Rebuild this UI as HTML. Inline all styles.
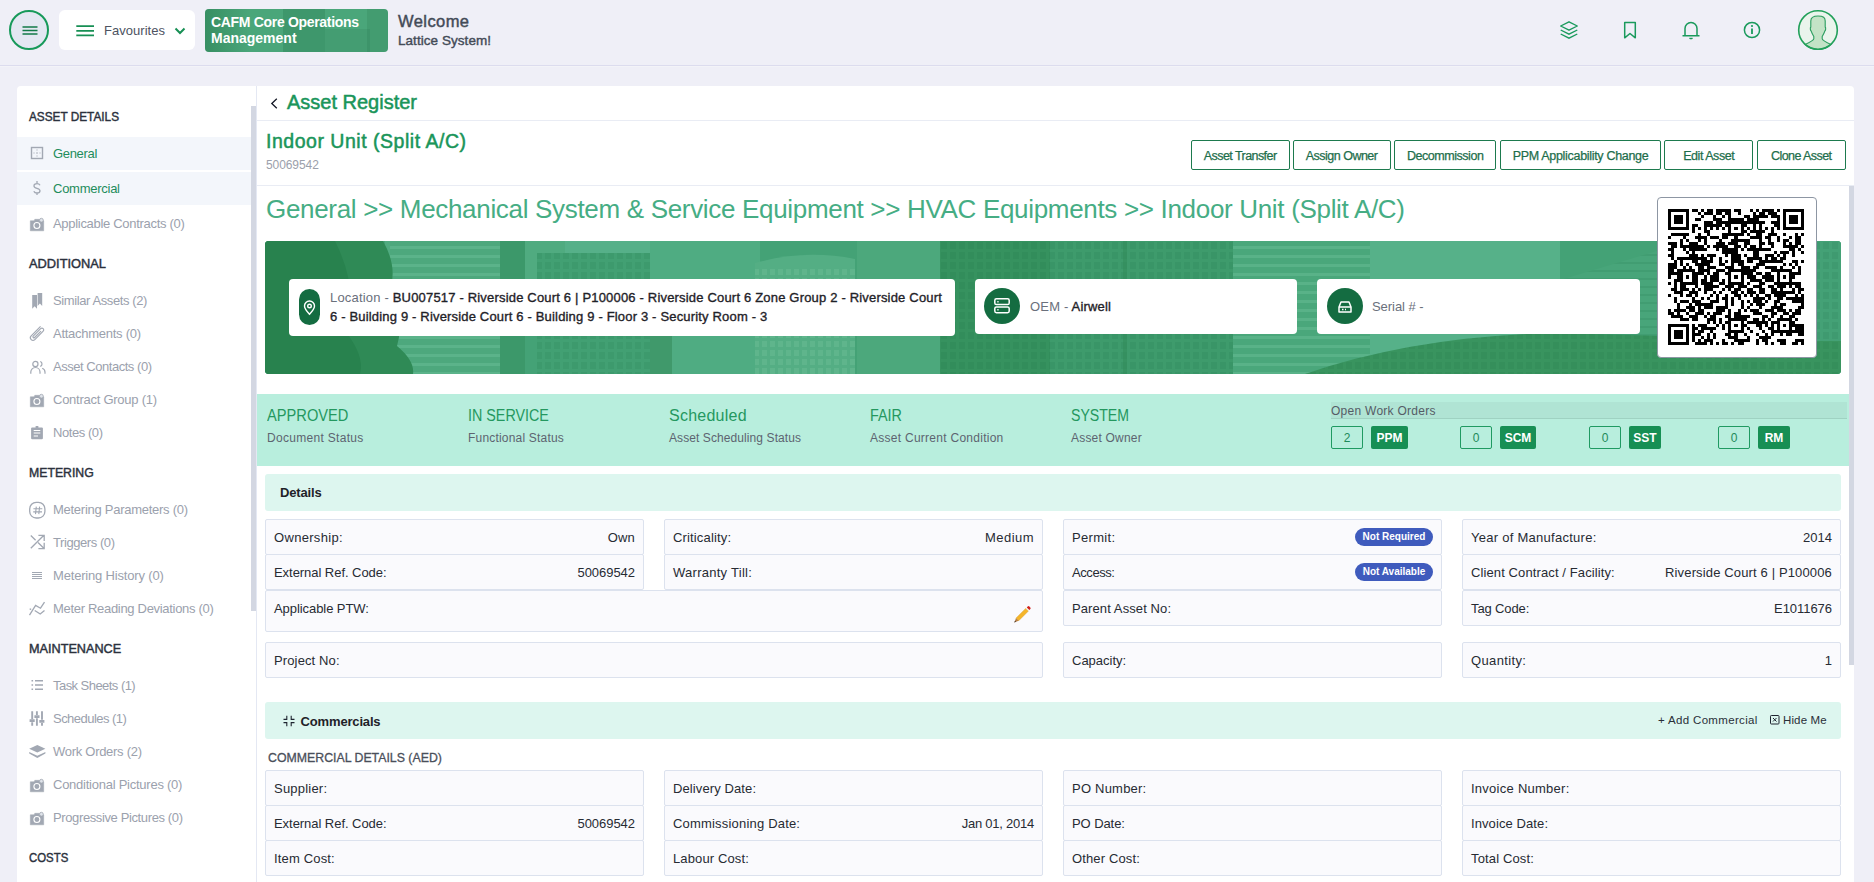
<!DOCTYPE html>
<html><head><meta charset="utf-8"><title>Asset</title>
<style>
*{box-sizing:border-box;margin:0;padding:0}
html,body{width:1874px;height:882px;overflow:hidden}
body{background:#efeff7;font-family:"Liberation Sans",sans-serif;position:relative;color:#333}
.a{position:absolute;white-space:nowrap}
#hdr{left:0;top:0;width:1874px;height:66px;border-bottom:1px solid #dcdcee;box-shadow:0 1px 0 #f3f3f8}
#menu{left:9px;top:10px;width:40px;height:40px;border:2px solid #17995a;border-radius:50%;background:#e3e7f2}
#fav{left:59px;top:10px;width:136px;height:40px;background:#fff;border-radius:6px}
#cafm{left:205px;top:9px;width:183px;height:43px;border-radius:4px;overflow:hidden;background:#4aa67a}
#sb{left:17px;top:86px;width:240px;height:820px;background:#fff;border-radius:4px 0 0 0}
#main{left:256px;top:86px;width:1598px;height:820px;background:#fff;border-left:1px solid #e4e8f3;border-radius:0 4px 0 0}
.sh{color:#2b313d;-webkit-text-stroke:.4px #2b313d}
.si{color:#9ba1ad}
.sic{left:30px;width:16px;height:16px;overflow:visible}
.btn{top:140px;height:30px;border:1px solid #1d7a4e;border-radius:2px;background:#fff}
.bt{color:#1d6e4b;-webkit-text-stroke:.25px #1d6e4b}
.card{background:#fff;border-radius:4px}
.st1{color:#24985f}
.st2{color:#5d6470}
.cnt{top:426px;width:32px;height:23px;border:1px solid #1f9a62;border-radius:2px}
.tag{top:426px;height:23px;background:#178f54;border-radius:2px}
.cell{background:#fafafd;border:1px solid #dce2ee;border-radius:2px}
.lb{color:#272b33}
.pill{background:#3f5bbd;border-radius:9px;height:18px}
.sec{background:#ddf6ef;border-radius:3px}
</style></head><body>

<div id="hdr" class="a"></div>
<div id="menu" class="a"><svg width="36" height="36" style="position:absolute;left:0;top:0"><path d="M11.5 15h15M11.5 18.5h15M11.5 22h15" stroke="#127a48" stroke-width="1.4"/></svg></div>
<div id="fav" class="a"><svg width="20" height="14" style="position:absolute;left:16px;top:15px"><path d="M1.3 1.2h17.7M1.3 5.8h17.7M1.3 10.4h17.7" stroke="#178f54" stroke-width="1.8"/></svg><svg width="12" height="8" style="position:absolute;left:115px;top:17px"><path d="M1.5 1.5l4.5 4.5l4.5-4.5" stroke="#178f54" stroke-width="2" fill="none"/></svg></div>
<div id="t1" class="a " style="top:23.00px;font-size:13px;line-height:16px;letter-spacing:0.033px;left:104px;color:#4d5362">Favourites</div>
<div id="cafm" class="a"><div class="a" style="left:0;top:0;width:45px;height:43px;background:linear-gradient(90deg,rgba(20,100,55,.35),rgba(20,100,55,0))"></div><div class="a" style="left:78px;top:0;width:42px;height:43px;background:rgba(25,100,60,.22)"></div><div class="a" style="left:120px;top:20px;width:45px;height:23px;background:rgba(25,100,60,.12)"></div><div class="a" style="left:162px;top:0;width:21px;height:43px;background:rgba(25,100,60,.15)"></div></div>
<div id="t2" class="a " style="top:14.00px;font-size:14px;line-height:16px;letter-spacing:-0.317px;left:211px;font-weight:bold;color:#fff">CAFM Core Operations</div>
<div id="t3" class="a " style="top:30.00px;font-size:14px;line-height:16px;left:211px;font-weight:bold;color:#fff">Management</div>
<div id="t4" class="a " style="top:11.00px;font-size:16.5px;line-height:21px;letter-spacing:0.422px;left:398px;color:#434b57;-webkit-text-stroke:.45px #434b57">Welcome</div>
<div id="t5" class="a " style="top:32.00px;font-size:13.5px;line-height:17px;letter-spacing:0.050px;left:398px;color:#434b57;-webkit-text-stroke:.4px #434b57">Lattice System!</div>
<svg class="a" style="left:1558px;top:19px" width="22" height="22" viewBox="0 0 22 22"><path d="M11 2.8L19.3 7L11 11.2L2.7 7Z" fill="none" stroke="#1a9a5c" stroke-width="1.4" stroke-linejoin="round"/><path d="M2.7 11L11 15.2L19.3 11M2.7 15L11 19.2L19.3 15" fill="none" stroke="#1a9a5c" stroke-width="1.4"/></svg>
<svg class="a" style="left:1622px;top:20px" width="16" height="20" viewBox="0 0 16 20"><path d="M2.7 2.5h10.6v15.3l-5.3-4.3l-5.3 4.3Z" fill="none" stroke="#1a9a5c" stroke-width="1.5" stroke-linejoin="round"/></svg>
<svg class="a" style="left:1680px;top:19px" width="22" height="22" viewBox="0 0 22 22"><path d="M5 16.5V9.5a6 6 0 0 1 12 0V16.5M2.5 16.7h17" fill="none" stroke="#1a9a5c" stroke-width="1.5"/><path d="M9.5 19q1.5 1.3 3 0" fill="none" stroke="#1a9a5c" stroke-width="1.3"/></svg>
<svg class="a" style="left:1742px;top:20px" width="20" height="20" viewBox="0 0 20 20"><circle cx="10" cy="10" r="7.6" fill="none" stroke="#1a9a5c" stroke-width="1.5"/><path d="M10 8.5v5.5" stroke="#1a9a5c" stroke-width="1.8"/><circle cx="10" cy="6" r="1.1" fill="#1a9a5c"/></svg>
<svg class="a" style="left:1797px;top:9px" width="42" height="42" viewBox="0 0 42 42"><circle cx="21" cy="21" r="19.3" fill="#eaf4ec"/><path d="M21 7C15.5 7 13.8 8.8 13.8 12V18C13 18.8 13.2 21.5 14.3 22.3C15 24.5 16 26 16.8 27.5V29.8C16.8 31 15 32.3 8.1 35.5A19.3 19.3 0 0 0 33.9 35.5C27 32.3 25.2 31 25.2 29.8V27.5C26 26 27 24.5 27.7 22.3C28.8 21.5 29 18.8 28.2 18V12C28.2 8.8 26.5 7 21 7Z" fill="#c3e3c6" stroke="#2a9d5e" stroke-width="1.1"/><circle cx="21" cy="21" r="19.3" fill="none" stroke="#22a05a" stroke-width="1.6"/></svg>
<div id="sb" class="a"></div>
<div class="a" style="left:17px;top:137px;width:234px;height:33px;background:#f3f6fb"></div>
<div class="a" style="left:17px;top:172px;width:234px;height:33px;background:#f3f6fb"></div>
<div class="a" style="left:251px;top:106px;width:5px;height:505px;background:#d3d7e2"></div>
<div id="t6" class="a sh" style="top:110.00px;font-size:12px;line-height:15px;transform:scaleX(0.9826);transform-origin:0 0;left:29px;">ASSET DETAILS</div>
<div id="t7" class="a sh" style="top:257.00px;font-size:12px;line-height:15px;transform:scaleX(1.0692);transform-origin:0 0;left:29px;">ADDITIONAL</div>
<div id="t8" class="a sh" style="top:466.00px;font-size:12px;line-height:15px;transform:scaleX(1.0222);transform-origin:0 0;left:29px;">METERING</div>
<div id="t9" class="a sh" style="top:642.00px;font-size:12px;line-height:15px;transform:scaleX(1.0556);transform-origin:0 0;left:29px;">MAINTENANCE</div>
<div id="t10" class="a sh" style="top:851.00px;font-size:12px;line-height:15px;transform:scaleX(0.9506);transform-origin:0 0;left:29px;">COSTS</div>
<svg class="a sic" style="top:146px" viewBox="0 0 16 16"><rect x="1.5" y="1.5" width="11" height="11" fill="none" stroke="#a2a8b3" stroke-width="1.4"/><path d="M7 3.5v1M7 6.5v1M7 9.5v1M3.5 7h1M6.5 7h1M9.5 7h1" stroke="#a2a8b3" stroke-width="1"/></svg>
<div id="t11" class="a si" style="top:146.00px;font-size:13px;line-height:16px;letter-spacing:-0.326px;left:53px;color:#1e8d5c">General</div>
<svg class="a sic" style="top:181px" viewBox="0 0 16 16"><path d="M10 4.3c-.5-1-1.6-1.6-3-1.6c-1.8 0-3 .9-3 2.2c0 3 6 1.8 6 4.9c0 1.4-1.3 2.3-3 2.3c-1.5 0-2.7-.7-3.2-1.8M7 0v2.7M7 11.3v2.7" fill="none" stroke="#a2a8b3" stroke-width="1.3"/></svg>
<div id="t12" class="a si" style="top:181.00px;font-size:13px;line-height:16px;letter-spacing:-0.261px;left:53px;color:#1e8d5c">Commercial</div>
<svg class="a sic" style="top:216px" viewBox="0 0 16 16"><path d="M.3 4.8H4.2L4.8 3.3H9.5V4.8H13.7V14.8H.3Z" fill="#a2a8b3" stroke="#a2a8b3" stroke-width=".5" stroke-linejoin="round"/><circle cx="6.9" cy="9.5" r="3" fill="none" stroke="#fff" stroke-width="1.1"/><circle cx="11.4" cy="4.2" r="1.9" fill="#dfe3ea" stroke="#a2a8b3" stroke-width=".8"/></svg>
<div id="t13" class="a si" style="top:216.00px;font-size:13px;line-height:16px;letter-spacing:-0.302px;left:53px;color:#9ba1ad">Applicable Contracts (0)</div>
<svg class="a sic" style="top:293px" viewBox="0 0 16 16"><path d="M2.2 2.1H7V15.7L4.6 13.3L2.2 15.7Z" fill="#a2a8b3"/><path d="M7.6 .1H12.2V12.9L9.9 10.5L7.6 12.9Z" fill="#a2a8b3"/></svg>
<div id="t14" class="a si" style="top:293.00px;font-size:13px;line-height:16px;letter-spacing:-0.397px;left:53px;color:#9ba1ad">Similar Assets (2)</div>
<svg class="a sic" style="top:326px" viewBox="0 0 16 16"><path d="M7.5 -2.6H-5.8A2.6 2.6 0 0 0 -5.8 2.6H6A1.8 1.8 0 0 0 6 -1H-4.5A1 1 0 0 0 -4.5 1H4.5" transform="translate(7.1 7.6) rotate(-45)" fill="none" stroke="#a2a8b3" stroke-width="1.15"/></svg>
<div id="t15" class="a si" style="top:326.00px;font-size:13px;line-height:16px;letter-spacing:-0.269px;left:53px;color:#9ba1ad">Attachments (0)</div>
<svg class="a sic" style="top:359px" viewBox="0 0 16 16"><circle cx="5.4" cy="4.9" r="2.6" fill="none" stroke="#a2a8b3" stroke-width="1.2"/><path d="M.8 14.8V13.1A4.6 4.6 0 0 1 10 13.1V14.8M10.2 2.5A2.5 2.5 0 0 1 10.2 7.3M12.2 9.3A4 4 0 0 1 15 13.2V14.8" fill="none" stroke="#a2a8b3" stroke-width="1.2"/></svg>
<div id="t16" class="a si" style="top:359.00px;font-size:13px;line-height:16px;letter-spacing:-0.467px;left:53px;color:#9ba1ad">Asset Contacts (0)</div>
<svg class="a sic" style="top:392px" viewBox="0 0 16 16"><path d="M.3 4.8H4.2L4.8 3.3H9.5V4.8H13.7V14.8H.3Z" fill="#a2a8b3" stroke="#a2a8b3" stroke-width=".5" stroke-linejoin="round"/><circle cx="6.9" cy="9.5" r="3" fill="none" stroke="#fff" stroke-width="1.1"/><circle cx="11.4" cy="4.2" r="1.9" fill="#dfe3ea" stroke="#a2a8b3" stroke-width=".8"/></svg>
<div id="t17" class="a si" style="top:392.00px;font-size:13px;line-height:16px;letter-spacing:-0.257px;left:53px;color:#9ba1ad">Contract Group (1)</div>
<svg class="a sic" style="top:425px" viewBox="0 0 16 16"><rect x="1.1" y="2.4" width="11.8" height="11.8" rx="1" fill="#a2a8b3"/><rect x="5.6" y="1" width="2.8" height="2.6" rx=".6" fill="#a2a8b3"/><path d="M3.7 5.5H10.3M3.7 8H10.3M3.7 11H8" stroke="#fff" stroke-width="1.1"/></svg>
<div id="t18" class="a si" style="top:425.00px;font-size:13px;line-height:16px;letter-spacing:-0.434px;left:53px;color:#9ba1ad">Notes (0)</div>
<svg class="a sic" style="top:502px" viewBox="0 0 16 16"><rect x="-.3" y=".4" width="15.2" height="15.6" rx="6.5" fill="none" stroke="#a2a8b3" stroke-width="1.3"/><path d="M6.3 4.6L5.5 12.1M9.6 4.6L8.8 12.1M3.4 6.8H12.3M3.2 9.9H12" stroke="#a2a8b3" stroke-width="1.1"/></svg>
<div id="t19" class="a si" style="top:502.00px;font-size:13px;line-height:16px;letter-spacing:-0.267px;left:53px;color:#9ba1ad">Metering Parameters (0)</div>
<svg class="a sic" style="top:535px" viewBox="0 0 16 16"><path d="M.8 .5L5.6 5.2M8 7.5L13.8 13.2M14.2 7.8V13.6H8.4M.8 13.2L13.6 .5M8.4 .3H14.2V6" fill="none" stroke="#a2a8b3" stroke-width="1.3"/></svg>
<div id="t20" class="a si" style="top:535.00px;font-size:13px;line-height:16px;letter-spacing:-0.427px;left:53px;color:#9ba1ad">Triggers (0)</div>
<svg class="a sic" style="top:568px" viewBox="0 0 16 16"><path d="M2 4.5H12M2 6.5H12M2 8.5H12M2 10.5H12" stroke="#a2a8b3" stroke-width="1" shape-rendering="crispEdges"/></svg>
<div id="t21" class="a si" style="top:568.00px;font-size:13px;line-height:16px;letter-spacing:-0.176px;left:53px;color:#9ba1ad">Metering History (0)</div>
<svg class="a sic" style="top:601px" viewBox="0 0 16 16"><path d="M-.5 14.2L5.6 4.4L10.5 7.2L14.5 1.2M4.7 9.5L10.2 13L14.5 9.5M-.3 8L1.2 8.3" fill="none" stroke="#a2a8b3" stroke-width="1.3"/></svg>
<div id="t22" class="a si" style="top:601.00px;font-size:13px;line-height:16px;letter-spacing:-0.307px;left:53px;color:#9ba1ad">Meter Reading Deviations (0)</div>
<svg class="a sic" style="top:678px" viewBox="0 0 16 16"><path d="M1.5 2.8h1.6M1.5 7h1.6M1.5 11.2h1.6M5 2.8h8M5 7h8M5 11.2h8" stroke="#a2a8b3" stroke-width="1.5"/></svg>
<div id="t23" class="a si" style="top:678.00px;font-size:13px;line-height:16px;letter-spacing:-0.544px;left:53px;color:#9ba1ad">Task Sheets (1)</div>
<svg class="a sic" style="top:711px" viewBox="0 0 16 16"><path d="M2.2 .3V8.2M2.2 11.3V14.8M6.9 .3V4.1M6.9 7.2V14.8M12 .3V8.7M12 11.9V14.8" stroke="#a2a8b3" stroke-width="1.9"/><path d="M-.4 9.7H4.7M4.4 5.6H9.5M9.3 10.3H14.4" stroke="#a2a8b3" stroke-width="2.7"/></svg>
<div id="t24" class="a si" style="top:711.00px;font-size:13px;line-height:16px;letter-spacing:-0.535px;left:53px;color:#9ba1ad">Schedules (1)</div>
<svg class="a sic" style="top:744px" viewBox="0 0 16 16"><path d="M7.3 1L15.4 4.8L7.3 8.6L-.8 4.8Z" fill="#a2a8b3"/><path d="M-.8 8L7.3 11.8L15.4 8V9.6L7.3 13.9L-.8 9.6Z" fill="#a2a8b3"/></svg>
<div id="t25" class="a si" style="top:744.00px;font-size:13px;line-height:16px;letter-spacing:-0.282px;left:53px;color:#9ba1ad">Work Orders (2)</div>
<svg class="a sic" style="top:777px" viewBox="0 0 16 16"><path d="M.3 4.8H4.2L4.8 3.3H9.5V4.8H13.7V14.8H.3Z" fill="#a2a8b3" stroke="#a2a8b3" stroke-width=".5" stroke-linejoin="round"/><circle cx="6.9" cy="9.5" r="3" fill="none" stroke="#fff" stroke-width="1.1"/><circle cx="11.4" cy="4.2" r="1.9" fill="#dfe3ea" stroke="#a2a8b3" stroke-width=".8"/></svg>
<div id="t26" class="a si" style="top:777.00px;font-size:13px;line-height:16px;letter-spacing:-0.249px;left:53px;color:#9ba1ad">Conditional Pictures (0)</div>
<svg class="a sic" style="top:810px" viewBox="0 0 16 16"><path d="M.3 4.8H4.2L4.8 3.3H9.5V4.8H13.7V14.8H.3Z" fill="#a2a8b3" stroke="#a2a8b3" stroke-width=".5" stroke-linejoin="round"/><circle cx="6.9" cy="9.5" r="3" fill="none" stroke="#fff" stroke-width="1.1"/><circle cx="11.4" cy="4.2" r="1.9" fill="#dfe3ea" stroke="#a2a8b3" stroke-width=".8"/></svg>
<div id="t27" class="a si" style="top:810.00px;font-size:13px;line-height:16px;letter-spacing:-0.379px;left:53px;color:#9ba1ad">Progressive Pictures (0)</div>
<div id="main" class="a"></div>
<div class="a" style="left:257px;top:120px;width:1597px;height:1px;background:#e9ecf4"></div>
<div class="a" style="left:257px;top:185px;width:1597px;height:1px;background:#e9ecf4"></div>
<div class="a" style="left:1849px;top:186px;width:5px;height:479px;background:#d3d7e2"></div>
<svg class="a" style="left:269px;top:97px" width="10" height="13"><path d="M7.8 1.8L2.8 6.5l5 4.7" fill="none" stroke="#141826" stroke-width="1.3"/></svg>
<div id="t28" class="a " style="top:90.00px;font-size:20px;line-height:25px;letter-spacing:-0.004px;left:287px;color:#1a955a;-webkit-text-stroke:.5px #1a955a">Asset Register</div>
<div id="t29" class="a " style="top:129.00px;font-size:19.5px;line-height:24px;letter-spacing:0.519px;left:266px;color:#1a955a;-webkit-text-stroke:.5px #1a955a">Indoor Unit (Split A/C)</div>
<div id="t30" class="a " style="top:158.00px;font-size:12px;line-height:15px;letter-spacing:-0.084px;left:266px;color:#9ba0ab">50069542</div>
<div class="a btn" style="left:1191px;width:99px"></div>
<div id="t31" class="a bt" style="top:148.00px;font-size:12.5px;line-height:16px;letter-spacing:-0.561px;left:1203.8px;">Asset Transfer</div>
<div class="a btn" style="left:1293px;width:98px"></div>
<div id="t32" class="a bt" style="top:148.00px;font-size:12.5px;line-height:16px;letter-spacing:-0.501px;left:1305.7px;">Assign Owner</div>
<div class="a btn" style="left:1394px;width:102px"></div>
<div id="t33" class="a bt" style="top:148.00px;font-size:12.5px;line-height:16px;letter-spacing:-0.452px;left:1406.9px;">Decommission</div>
<div class="a btn" style="left:1500px;width:161px"></div>
<div id="t34" class="a bt" style="top:148.00px;font-size:12.5px;line-height:16px;letter-spacing:-0.311px;left:1512.7px;">PPM Applicability Change</div>
<div class="a btn" style="left:1664px;width:89px"></div>
<div id="t35" class="a bt" style="top:148.00px;font-size:12.5px;line-height:16px;letter-spacing:-0.454px;left:1683.2px;">Edit Asset</div>
<div class="a btn" style="left:1757px;width:89px"></div>
<div id="t36" class="a bt" style="top:148.00px;font-size:12.5px;line-height:16px;letter-spacing:-0.571px;left:1771px;">Clone Asset</div>
<div id="t37" class="a " style="top:193.00px;font-size:26px;line-height:32px;letter-spacing:-0.319px;left:266px;color:#46ad84">General &gt;&gt; Mechanical System &amp; Service Equipment &gt;&gt; HVAC Equipments &gt;&gt; Indoor Unit (Split A/C)</div>
<div class="a" style="left:265px;top:241px;width:1576px;height:133px;border-radius:4px;overflow:hidden;background:#45a377"><svg width="1576" height="133" style="position:absolute;left:0;top:0"><defs><pattern id="win" width="9" height="10" patternUnits="userSpaceOnUse"><rect width="9" height="10" fill="none"/><rect x="1" y="1" width="6" height="7" fill="#1d6e45" opacity=".12"/></pattern><pattern id="winL" width="8" height="9" patternUnits="userSpaceOnUse"><rect x="1" y="1" width="5" height="6" fill="#8fd4b0" opacity=".18"/></pattern><pattern id="hs" width="10" height="8" patternUnits="userSpaceOnUse"><rect x="0" y="5" width="10" height="2" fill="#1d6e45" opacity=".15"/></pattern><pattern id="hsL" width="10" height="9" patternUnits="userSpaceOnUse"><rect x="0" y="5" width="10" height="3" fill="#8fd8b4" opacity=".22"/></pattern><pattern id="leaf" width="14" height="12" patternUnits="userSpaceOnUse"><circle cx="4" cy="4" r="2.2" fill="#3d9a66" opacity=".35"/><circle cx="11" cy="9" r="1.8" fill="#3d9a66" opacity=".3"/></pattern></defs><rect width="1576" height="133" fill="#44a276"/><rect x="120" y="0" width="280" height="40" fill="#50ab80"/><rect x="125" y="0" width="110" height="133" fill="#4da87d"/><rect x="125" y="0" width="110" height="133" fill="url(#hsL)"/><rect x="235" y="0" width="25" height="133" fill="#3c986a"/><rect x="272" y="12" width="125" height="121" fill="#42a073"/><rect x="272" y="12" width="125" height="121" fill="url(#win)"/><rect x="300" y="0" width="95" height="12" fill="#56b089"/><rect x="385" y="0" width="110" height="133" fill="#4fac82"/><rect x="385" y="40" width="22" height="93" fill="#40996b"/><path d="M490 22Q540 8 590 18V133H490Z" fill="#54ae84"/><rect x="490" y="25" width="100" height="108" fill="url(#winL)"/><rect x="592" y="0" width="83" height="133" fill="#4ca87c"/><rect x="675" y="0" width="110" height="133" fill="#36925f"/><rect x="675" y="0" width="110" height="133" fill="url(#win)"/><rect x="785" y="0" width="185" height="133" fill="#3e9b6c"/><rect x="785" y="0" width="185" height="133" fill="url(#win)"/><rect x="858" y="0" width="4" height="133" fill="#338d5c" opacity=".6"/><rect x="968" y="0" width="137" height="133" fill="#4aa77b"/><rect x="968" y="0" width="137" height="133" fill="url(#hsL)"/><rect x="1105" y="0" width="190" height="133" fill="#56b189"/><path d="M1285 42L1425 0H1576V133H1285Z" fill="#48a57a"/><path d="M1285 42L1425 0H1576V133H1285Z" fill="url(#hs)"/><path d="M1040 133Q1150 95 1290 92L1576 100V133Z" fill="#39945f"/><path d="M1040 133Q1150 95 1290 92L1576 100V133Z" fill="url(#win)"/><rect x="1515" y="0" width="61" height="100" fill="#44a176"/><rect x="1515" y="0" width="61" height="100" fill="url(#win)"/><path d="M0 0H118Q135 30 122 55Q140 80 132 105Q150 120 148 133H0Z" fill="#2f8a56"/><path d="M0 0H70Q95 50 80 90Q100 115 95 133H0Z" fill="#28824e"/></svg></div>
<div class="a card" style="left:289px;top:279px;width:666px;height:57px"></div>
<div class="a" style="left:299px;top:289px;width:21px;height:36px;border-radius:11px;background:#146c41"></div>
<svg class="a" style="left:301px;top:298px" width="17" height="18" viewBox="0 0 17 18"><path d="M8.5 16.3c-3-3.3-5-6-5-8.3a5 5 0 0 1 10 0c0 2.3-2 5-5 8.3Z" fill="none" stroke="#fff" stroke-width="1.4"/><circle cx="8.5" cy="8" r="1.8" fill="none" stroke="#fff" stroke-width="1.4"/></svg>
<div id="t38" class="a " style="top:290.00px;font-size:13px;line-height:16px;letter-spacing:0.183px;left:330px;color:#1f2228"><span style="color:#6a707c">Location - </span><span style="-webkit-text-stroke:.35px #1f2228">BU007517 - Riverside Court 6 | P100006 - Riverside Court 6 Zone Group 2 - Riverside Court</span></div>
<div id="t39" class="a " style="top:309.00px;font-size:13px;line-height:16px;letter-spacing:0.172px;left:330px;color:#1f2228"><span style="-webkit-text-stroke:.35px #1f2228">6 - Building 9 - Riverside Court 6 - Building 9 - Floor 3 - Security Room - 3</span></div>
<div class="a card" style="left:975px;top:279px;width:322px;height:55px"></div>
<div class="a" style="left:984px;top:288px;width:36px;height:36px;border-radius:50%;background:#146c41"></div>
<svg class="a" style="left:993px;top:297px" width="18" height="18" viewBox="0 0 18 18"><rect x="1.8" y="1.8" width="14.4" height="5.8" rx="1.6" fill="none" stroke="#fff" stroke-width="1.5"/><rect x="1.8" y="9.9" width="14.4" height="5.8" rx="1.6" fill="none" stroke="#fff" stroke-width="1.5"/><path d="M4.3 4.7h1.3M4.3 12.8h1.3" stroke="#fff" stroke-width="1.4"/></svg>
<div id="t40" class="a " style="top:299.00px;font-size:13px;line-height:16px;letter-spacing:0.188px;left:1030px;color:#6a707c">OEM - <span style="color:#1f2228;-webkit-text-stroke:.35px #1f2228">Airwell</span></div>
<div class="a card" style="left:1317px;top:279px;width:323px;height:55px"></div>
<div class="a" style="left:1327px;top:288px;width:36px;height:36px;border-radius:50%;background:#146c41"></div>
<svg class="a" style="left:1336px;top:298px" width="18" height="18" viewBox="0 0 18 18"><path d="M3 9l2-5h8l2 5v5h-12Z" fill="none" stroke="#fff" stroke-width="1.5" stroke-linejoin="round"/><path d="M3 9h12M6 11.5h1.5M9 11.5h1" stroke="#fff" stroke-width="1.5"/></svg>
<div id="t41" class="a " style="top:299.00px;font-size:13px;line-height:16px;letter-spacing:-0.047px;left:1372px;color:#6a707c">Serial # -</div>
<div class="a" style="left:1657px;top:197px;width:160px;height:161px;background:#fff;border:1px solid #8d96a3;border-radius:4px"></div>
<svg class="a" style="left:1668px;top:209px" width="136" height="136" viewBox="0 0 45 45" shape-rendering="crispEdges"><path d="M0 0h7v1h-7zM8 0h2v1h-2zM11 0h1v1h-1zM13 0h2v1h-2zM16 0h5v1h-5zM22 0h2v1h-2zM27 0h1v1h-1zM29 0h1v1h-1zM31 0h4v1h-4zM36 0h1v1h-1zM38 0h7v1h-7zM0 1h1v1h-1zM6 1h1v1h-1zM10 1h1v1h-1zM12 1h3v1h-3zM16 1h2v1h-2zM19 1h2v1h-2zM23 1h1v1h-1zM28 1h1v1h-1zM30 1h2v1h-2zM33 1h3v1h-3zM38 1h1v1h-1zM44 1h1v1h-1zM0 2h1v1h-1zM2 2h3v1h-3zM6 2h1v1h-1zM11 2h1v1h-1zM15 2h1v1h-1zM18 2h1v1h-1zM20 2h1v1h-1zM25 2h2v1h-2zM28 2h5v1h-5zM34 2h3v1h-3zM38 2h1v1h-1zM40 2h3v1h-3zM44 2h1v1h-1zM0 3h1v1h-1zM2 3h3v1h-3zM6 3h1v1h-1zM9 3h2v1h-2zM15 3h3v1h-3zM20 3h5v1h-5zM26 3h4v1h-4zM36 3h1v1h-1zM38 3h1v1h-1zM40 3h3v1h-3zM44 3h1v1h-1zM0 4h1v1h-1zM2 4h3v1h-3zM6 4h1v1h-1zM12 4h3v1h-3zM16 4h16v1h-16zM34 4h3v1h-3zM38 4h1v1h-1zM40 4h3v1h-3zM44 4h1v1h-1zM0 5h1v1h-1zM6 5h1v1h-1zM8 5h2v1h-2zM12 5h6v1h-6zM19 5h2v1h-2zM24 5h2v1h-2zM28 5h1v1h-1zM30 5h1v1h-1zM35 5h2v1h-2zM38 5h1v1h-1zM44 5h1v1h-1zM0 6h7v1h-7zM8 6h1v1h-1zM10 6h1v1h-1zM12 6h1v1h-1zM14 6h1v1h-1zM16 6h1v1h-1zM18 6h1v1h-1zM20 6h1v1h-1zM22 6h1v1h-1zM24 6h1v1h-1zM26 6h1v1h-1zM28 6h1v1h-1zM30 6h1v1h-1zM32 6h1v1h-1zM34 6h1v1h-1zM36 6h1v1h-1zM38 6h7v1h-7zM8 7h1v1h-1zM12 7h2v1h-2zM20 7h1v1h-1zM24 7h2v1h-2zM27 7h5v1h-5zM34 7h1v1h-1zM1 8h6v1h-6zM10 8h1v1h-1zM13 8h1v1h-1zM18 8h7v1h-7zM26 8h1v1h-1zM29 8h2v1h-2zM33 8h3v1h-3zM38 8h1v1h-1zM42 8h1v1h-1zM44 8h1v1h-1zM0 9h1v1h-1zM5 9h1v1h-1zM9 9h4v1h-4zM14 9h3v1h-3zM18 9h2v1h-2zM22 9h1v1h-1zM27 9h4v1h-4zM32 9h2v1h-2zM36 9h1v1h-1zM40 9h1v1h-1zM42 9h2v1h-2zM4 10h1v1h-1zM6 10h1v1h-1zM10 10h1v1h-1zM12 10h1v1h-1zM17 10h1v1h-1zM21 10h6v1h-6zM30 10h1v1h-1zM33 10h1v1h-1zM36 10h1v1h-1zM38 10h2v1h-2zM42 10h2v1h-2zM0 11h3v1h-3zM4 11h1v1h-1zM7 11h3v1h-3zM12 11h1v1h-1zM16 11h3v1h-3zM20 11h3v1h-3zM25 11h2v1h-2zM30 11h2v1h-2zM33 11h2v1h-2zM38 11h1v1h-1zM40 11h1v1h-1zM42 11h2v1h-2zM1 12h2v1h-2zM4 12h8v1h-8zM13 12h1v1h-1zM15 12h5v1h-5zM22 12h2v1h-2zM25 12h1v1h-1zM27 12h2v1h-2zM30 12h1v1h-1zM34 12h1v1h-1zM38 12h5v1h-5zM44 12h1v1h-1zM0 13h2v1h-2zM5 13h1v1h-1zM7 13h6v1h-6zM16 13h1v1h-1zM18 13h5v1h-5zM24 13h1v1h-1zM26 13h8v1h-8zM40 13h2v1h-2zM43 13h1v1h-1zM1 14h1v1h-1zM6 14h1v1h-1zM8 14h1v1h-1zM18 14h5v1h-5zM28 14h2v1h-2zM35 14h1v1h-1zM37 14h3v1h-3zM41 14h1v1h-1zM44 14h1v1h-1zM0 15h2v1h-2zM7 15h3v1h-3zM11 15h1v1h-1zM13 15h3v1h-3zM19 15h1v1h-1zM21 15h3v1h-3zM25 15h1v1h-1zM28 15h2v1h-2zM32 15h3v1h-3zM36 15h1v1h-1zM38 15h1v1h-1zM41 15h1v1h-1zM1 16h1v1h-1zM3 16h10v1h-10zM14 16h1v1h-1zM17 16h1v1h-1zM21 16h3v1h-3zM26 16h5v1h-5zM32 16h1v1h-1zM34 16h2v1h-2zM37 16h2v1h-2zM2 17h1v1h-1zM4 17h1v1h-1zM8 17h2v1h-2zM11 17h4v1h-4zM17 17h1v1h-1zM19 17h1v1h-1zM21 17h4v1h-4zM26 17h2v1h-2zM30 17h8v1h-8zM41 17h2v1h-2zM44 17h1v1h-1zM0 18h3v1h-3zM4 18h1v1h-1zM6 18h1v1h-1zM9 18h5v1h-5zM17 18h2v1h-2zM21 18h1v1h-1zM23 18h2v1h-2zM29 18h3v1h-3zM38 18h1v1h-1zM40 18h1v1h-1zM42 18h1v1h-1zM0 19h3v1h-3zM5 19h1v1h-1zM7 19h1v1h-1zM10 19h2v1h-2zM13 19h3v1h-3zM19 19h3v1h-3zM24 19h3v1h-3zM28 19h2v1h-2zM32 19h4v1h-4zM37 19h1v1h-1zM41 19h1v1h-1zM43 19h1v1h-1zM0 20h2v1h-2zM3 20h6v1h-6zM10 20h4v1h-4zM16 20h3v1h-3zM20 20h9v1h-9zM34 20h7v1h-7zM43 20h1v1h-1zM0 21h5v1h-5zM8 21h4v1h-4zM13 21h1v1h-1zM15 21h2v1h-2zM19 21h2v1h-2zM24 21h4v1h-4zM29 21h2v1h-2zM32 21h2v1h-2zM36 21h1v1h-1zM40 21h4v1h-4zM0 22h1v1h-1zM3 22h2v1h-2zM6 22h1v1h-1zM8 22h2v1h-2zM12 22h1v1h-1zM14 22h3v1h-3zM20 22h1v1h-1zM22 22h1v1h-1zM24 22h1v1h-1zM26 22h3v1h-3zM31 22h4v1h-4zM36 22h1v1h-1zM38 22h1v1h-1zM40 22h2v1h-2zM2 23h3v1h-3zM8 23h2v1h-2zM11 23h2v1h-2zM14 23h3v1h-3zM18 23h1v1h-1zM20 23h1v1h-1zM24 23h1v1h-1zM27 23h4v1h-4zM32 23h3v1h-3zM36 23h1v1h-1zM40 23h1v1h-1zM0 24h1v1h-1zM2 24h1v1h-1zM4 24h6v1h-6zM11 24h4v1h-4zM17 24h2v1h-2zM20 24h5v1h-5zM26 24h1v1h-1zM30 24h2v1h-2zM35 24h9v1h-9zM2 25h1v1h-1zM4 25h2v1h-2zM9 25h1v1h-1zM12 25h5v1h-5zM19 25h3v1h-3zM23 25h3v1h-3zM28 25h3v1h-3zM33 25h2v1h-2zM36 25h3v1h-3zM40 25h1v1h-1zM42 25h2v1h-2zM1 26h2v1h-2zM4 26h3v1h-3zM8 26h1v1h-1zM10 26h1v1h-1zM12 26h3v1h-3zM18 26h1v1h-1zM20 26h1v1h-1zM22 26h2v1h-2zM26 26h2v1h-2zM30 26h2v1h-2zM34 26h2v1h-2zM37 26h1v1h-1zM41 26h1v1h-1zM43 26h2v1h-2zM2 27h3v1h-3zM7 27h3v1h-3zM12 27h1v1h-1zM15 27h1v1h-1zM17 27h1v1h-1zM21 27h2v1h-2zM24 27h1v1h-1zM26 27h3v1h-3zM30 27h2v1h-2zM34 27h8v1h-8zM43 27h1v1h-1zM0 28h1v1h-1zM4 28h1v1h-1zM6 28h2v1h-2zM9 28h1v1h-1zM14 28h1v1h-1zM16 28h1v1h-1zM19 28h1v1h-1zM22 28h2v1h-2zM25 28h1v1h-1zM27 28h1v1h-1zM29 28h1v1h-1zM32 28h2v1h-2zM35 28h4v1h-4zM42 28h1v1h-1zM44 28h1v1h-1zM2 29h1v1h-1zM8 29h1v1h-1zM11 29h1v1h-1zM13 29h1v1h-1zM16 29h1v1h-1zM18 29h2v1h-2zM21 29h1v1h-1zM23 29h1v1h-1zM28 29h4v1h-4zM33 29h1v1h-1zM36 29h2v1h-2zM39 29h6v1h-6zM2 30h1v1h-1zM4 30h3v1h-3zM8 30h3v1h-3zM14 30h3v1h-3zM19 30h1v1h-1zM21 30h1v1h-1zM24 30h1v1h-1zM26 30h1v1h-1zM28 30h3v1h-3zM32 30h1v1h-1zM35 30h2v1h-2zM41 30h4v1h-4zM3 31h1v1h-1zM7 31h1v1h-1zM9 31h6v1h-6zM19 31h1v1h-1zM21 31h1v1h-1zM24 31h1v1h-1zM27 31h1v1h-1zM29 31h3v1h-3zM35 31h1v1h-1zM37 31h2v1h-2zM44 31h1v1h-1zM3 32h1v1h-1zM6 32h3v1h-3zM10 32h1v1h-1zM12 32h3v1h-3zM16 32h4v1h-4zM24 32h1v1h-1zM26 32h1v1h-1zM30 32h1v1h-1zM34 32h4v1h-4zM43 32h2v1h-2zM0 33h1v1h-1zM2 33h4v1h-4zM7 33h2v1h-2zM10 33h2v1h-2zM16 33h3v1h-3zM20 33h1v1h-1zM23 33h1v1h-1zM25 33h1v1h-1zM27 33h3v1h-3zM32 33h3v1h-3zM36 33h3v1h-3zM40 33h1v1h-1zM42 33h2v1h-2zM0 34h2v1h-2zM3 34h1v1h-1zM6 34h1v1h-1zM9 34h3v1h-3zM13 34h1v1h-1zM15 34h3v1h-3zM20 34h1v1h-1zM22 34h2v1h-2zM28 34h3v1h-3zM34 34h2v1h-2zM38 34h2v1h-2zM41 34h3v1h-3zM1 35h4v1h-4zM7 35h3v1h-3zM12 35h1v1h-1zM14 35h2v1h-2zM19 35h2v1h-2zM22 35h5v1h-5zM31 35h2v1h-2zM34 35h1v1h-1zM37 35h1v1h-1zM40 35h2v1h-2zM4 36h3v1h-3zM8 36h2v1h-2zM13 36h3v1h-3zM17 36h1v1h-1zM20 36h6v1h-6zM28 36h2v1h-2zM31 36h1v1h-1zM33 36h1v1h-1zM36 36h5v1h-5zM42 36h1v1h-1zM13 37h1v1h-1zM15 37h1v1h-1zM17 37h1v1h-1zM19 37h2v1h-2zM24 37h1v1h-1zM26 37h7v1h-7zM34 37h3v1h-3zM40 37h2v1h-2zM0 38h7v1h-7zM8 38h1v1h-1zM10 38h3v1h-3zM16 38h1v1h-1zM18 38h1v1h-1zM20 38h1v1h-1zM22 38h1v1h-1zM24 38h2v1h-2zM29 38h2v1h-2zM32 38h1v1h-1zM34 38h1v1h-1zM36 38h1v1h-1zM38 38h1v1h-1zM40 38h5v1h-5zM0 39h1v1h-1zM6 39h1v1h-1zM8 39h2v1h-2zM11 39h5v1h-5zM18 39h1v1h-1zM20 39h1v1h-1zM24 39h1v1h-1zM26 39h1v1h-1zM30 39h1v1h-1zM33 39h2v1h-2zM36 39h1v1h-1zM40 39h1v1h-1zM42 39h3v1h-3zM0 40h1v1h-1zM2 40h3v1h-3zM6 40h1v1h-1zM8 40h1v1h-1zM10 40h2v1h-2zM14 40h1v1h-1zM20 40h5v1h-5zM27 40h1v1h-1zM31 40h1v1h-1zM34 40h11v1h-11zM0 41h1v1h-1zM2 41h3v1h-3zM6 41h1v1h-1zM8 41h3v1h-3zM13 41h1v1h-1zM15 41h1v1h-1zM19 41h2v1h-2zM22 41h1v1h-1zM25 41h1v1h-1zM29 41h1v1h-1zM32 41h1v1h-1zM34 41h1v1h-1zM37 41h1v1h-1zM39 41h2v1h-2zM43 41h2v1h-2zM0 42h1v1h-1zM2 42h3v1h-3zM6 42h1v1h-1zM8 42h1v1h-1zM11 42h1v1h-1zM13 42h1v1h-1zM15 42h1v1h-1zM20 42h3v1h-3zM26 42h1v1h-1zM30 42h4v1h-4zM0 43h1v1h-1zM6 43h1v1h-1zM8 43h1v1h-1zM10 43h1v1h-1zM12 43h3v1h-3zM18 43h1v1h-1zM22 43h5v1h-5zM29 43h1v1h-1zM31 43h2v1h-2zM36 43h3v1h-3zM42 43h3v1h-3zM0 44h7v1h-7zM9 44h4v1h-4zM14 44h1v1h-1zM16 44h1v1h-1zM18 44h2v1h-2zM21 44h1v1h-1zM23 44h2v1h-2zM29 44h1v1h-1zM32 44h1v1h-1zM34 44h1v1h-1zM37 44h2v1h-2zM41 44h2v1h-2zM44 44h1v1h-1z" fill="#000"/></svg>
<div class="a" style="left:257px;top:394px;width:1592px;height:72px;background:#b8eedd"></div>
<div id="t42" class="a st1" style="top:406.00px;font-size:16px;line-height:20px;transform:scaleX(0.9154);transform-origin:0 0;left:267px;">APPROVED</div>
<div id="t43" class="a st2" style="top:431.00px;font-size:12px;line-height:15px;letter-spacing:0.304px;left:267px;">Document Status</div>
<div id="t44" class="a st1" style="top:406.00px;font-size:16px;line-height:20px;transform:scaleX(0.8948);transform-origin:0 0;left:468px;">IN SERVICE</div>
<div id="t45" class="a st2" style="top:431.00px;font-size:12px;line-height:15px;letter-spacing:0.193px;left:468px;">Functional Status</div>
<div id="t46" class="a st1" style="top:406.00px;font-size:16px;line-height:20px;letter-spacing:0.247px;left:669px;">Scheduled</div>
<div id="t47" class="a st2" style="top:431.00px;font-size:12px;line-height:15px;letter-spacing:0.087px;left:669px;">Asset Scheduling Status</div>
<div id="t48" class="a st1" style="top:406.00px;font-size:16px;line-height:20px;transform:scaleX(0.8998);transform-origin:0 0;left:870px;">FAIR</div>
<div id="t49" class="a st2" style="top:431.00px;font-size:12px;line-height:15px;letter-spacing:0.268px;left:870px;">Asset Current Condition</div>
<div id="t50" class="a st1" style="top:406.00px;font-size:16px;line-height:20px;transform:scaleX(0.8815);transform-origin:0 0;left:1071px;">SYSTEM</div>
<div id="t51" class="a st2" style="top:431.00px;font-size:12px;line-height:15px;letter-spacing:0.201px;left:1071px;">Asset Owner</div>
<div class="a" style="left:1331px;top:402px;width:516px;height:17px;background:#b0e4d4;border-bottom:1px solid #9fd2c2"></div>
<div id="t52" class="a " style="top:404.00px;font-size:12px;line-height:15px;letter-spacing:0.268px;left:1331px;color:#555c66">Open Work Orders</div>
<div class="a cnt" style="left:1331px"></div>
<div id="t53" class="a " style="top:431.00px;font-size:12px;line-height:15px;left:1347px;color:#1f8a5a;width:0;text-align:center;display:flex;justify-content:center">2</div>
<div class="a tag" style="left:1371px;width:37px"></div>
<div id="t54" class="a " style="top:431.00px;font-size:12px;line-height:15px;left:1389.5px;color:#fff;font-weight:bold;width:0;display:flex;justify-content:center">PPM</div>
<div class="a cnt" style="left:1460px"></div>
<div id="t55" class="a " style="top:431.00px;font-size:12px;line-height:15px;left:1476px;color:#1f8a5a;width:0;text-align:center;display:flex;justify-content:center">0</div>
<div class="a tag" style="left:1500px;width:36px"></div>
<div id="t56" class="a " style="top:431.00px;font-size:12px;line-height:15px;left:1518.0px;color:#fff;font-weight:bold;width:0;display:flex;justify-content:center">SCM</div>
<div class="a cnt" style="left:1589px"></div>
<div id="t57" class="a " style="top:431.00px;font-size:12px;line-height:15px;left:1605px;color:#1f8a5a;width:0;text-align:center;display:flex;justify-content:center">0</div>
<div class="a tag" style="left:1629px;width:32px"></div>
<div id="t58" class="a " style="top:431.00px;font-size:12px;line-height:15px;left:1645.0px;color:#fff;font-weight:bold;width:0;display:flex;justify-content:center">SST</div>
<div class="a cnt" style="left:1718px"></div>
<div id="t59" class="a " style="top:431.00px;font-size:12px;line-height:15px;left:1734px;color:#1f8a5a;width:0;text-align:center;display:flex;justify-content:center">0</div>
<div class="a tag" style="left:1758px;width:32px"></div>
<div id="t60" class="a " style="top:431.00px;font-size:12px;line-height:15px;left:1774.0px;color:#fff;font-weight:bold;width:0;display:flex;justify-content:center">RM</div>
<div class="a sec" style="left:265px;top:474px;width:1576px;height:37px"></div>
<div id="t61" class="a " style="top:485.00px;font-size:13px;line-height:16px;letter-spacing:-0.156px;left:280px;font-weight:bold;color:#1f2228">Details</div>
<div class="a cell" style="left:265px;top:519px;width:379px;height:36px"></div>
<div class="a cell" style="left:265px;top:554px;width:379px;height:36px"></div>
<div id="t62" class="a lb" style="top:530.00px;font-size:13px;line-height:16px;letter-spacing:0.316px;left:274px;">Ownership:</div>
<div id="t63" class="a lb" style="top:530.00px;font-size:13px;line-height:16px;letter-spacing:0.184px;left:385px;width:250px;text-align:right;">Own</div>
<div id="t64" class="a lb" style="top:565.00px;font-size:13px;line-height:16px;letter-spacing:-0.048px;left:274px;">External Ref. Code:</div>
<div id="t65" class="a lb" style="top:565.00px;font-size:13px;line-height:16px;letter-spacing:-0.035px;left:385px;width:250px;text-align:right;">50069542</div>
<div class="a cell" style="left:664px;top:519px;width:379px;height:36px"></div>
<div class="a cell" style="left:664px;top:554px;width:379px;height:36px"></div>
<div id="t66" class="a lb" style="top:530.00px;font-size:13px;line-height:16px;letter-spacing:0.151px;left:673px;">Criticality:</div>
<div id="t67" class="a lb" style="top:530.00px;font-size:13px;line-height:16px;letter-spacing:0.471px;left:784px;width:250px;text-align:right;">Medium</div>
<div id="t68" class="a lb" style="top:565.00px;font-size:13px;line-height:16px;letter-spacing:0.264px;left:673px;">Warranty Till:</div>
<div class="a cell" style="left:265px;top:590px;width:778px;height:42px"></div>
<div id="t69" class="a lb" style="top:601.00px;font-size:13px;line-height:16px;letter-spacing:-0.069px;left:274px;">Applicable PTW:</div>
<svg class="a" style="left:1012px;top:604px" width="20" height="20" viewBox="0 0 20 20"><path d="M4 14.2l9.8-9.8l2.6 2.6l-9.8 9.8Z" fill="#f5b52a" stroke="#d99a1a" stroke-width=".5"/><path d="M13.8 4.4l1-1l2.6 2.6l-1 1Z" fill="#f4efe2"/><path d="M14.8 3.4l.9-.9a1.2 1.2 0 0 1 1.7 0l.9.9a1.2 1.2 0 0 1 0 1.7l-.9.9Z" fill="#d2211c"/><path d="M2.3 18.5l1.7-4.3l2.6 2.6Z" fill="#b57d45"/><path d="M2.3 18.5l.7-1.7l1 1Z" fill="#333"/></svg>
<div class="a cell" style="left:265px;top:642px;width:778px;height:36px"></div>
<div id="t70" class="a lb" style="top:653.00px;font-size:13px;line-height:16px;letter-spacing:0.128px;left:274px;">Project No:</div>
<div class="a cell" style="left:1063px;top:519px;width:379px;height:36px"></div>
<div class="a cell" style="left:1063px;top:554px;width:379px;height:36px"></div>
<div class="a cell" style="left:1063px;top:590px;width:379px;height:36px"></div>
<div class="a cell" style="left:1063px;top:642px;width:379px;height:36px"></div>
<div id="t71" class="a lb" style="top:530.00px;font-size:13px;line-height:16px;letter-spacing:0.304px;left:1072px;">Permit:</div>
<div id="t72" class="a lb" style="top:565.00px;font-size:13px;line-height:16px;letter-spacing:-0.421px;left:1072px;">Access:</div>
<div id="t73" class="a lb" style="top:601.00px;font-size:13px;line-height:16px;letter-spacing:0.096px;left:1072px;">Parent Asset No:</div>
<div id="t74" class="a lb" style="top:653.00px;font-size:13px;line-height:16px;left:1072px;">Capacity:</div>
<div class="a pill" style="left:1355px;top:528px;width:78px"></div>
<div id="t75" class="a " style="top:531.00px;font-size:10px;line-height:12px;left:1394px;color:#fff;font-weight:bold;width:0;display:flex;justify-content:center">Not Required</div>
<div class="a pill" style="left:1355px;top:563px;width:78px"></div>
<div id="t76" class="a " style="top:566.00px;font-size:10px;line-height:12px;left:1394px;color:#fff;font-weight:bold;width:0;display:flex;justify-content:center">Not Available</div>
<div class="a cell" style="left:1462px;top:519px;width:379px;height:36px"></div>
<div class="a cell" style="left:1462px;top:554px;width:379px;height:36px"></div>
<div class="a cell" style="left:1462px;top:590px;width:379px;height:36px"></div>
<div class="a cell" style="left:1462px;top:642px;width:379px;height:36px"></div>
<div id="t77" class="a lb" style="top:530.00px;font-size:13px;line-height:16px;letter-spacing:0.268px;left:1471px;">Year of Manufacture:</div>
<div id="t78" class="a lb" style="top:530.00px;font-size:13px;line-height:16px;letter-spacing:0.024px;left:1582px;width:250px;text-align:right;">2014</div>
<div id="t79" class="a lb" style="top:565.00px;font-size:13px;line-height:16px;letter-spacing:0.108px;left:1471px;">Client Contract / Facility:</div>
<div id="t80" class="a lb" style="top:565.00px;font-size:13px;line-height:16px;letter-spacing:0.143px;left:1582px;width:250px;text-align:right;">Riverside Court 6 | P100006</div>
<div id="t81" class="a lb" style="top:601.00px;font-size:13px;line-height:16px;letter-spacing:-0.122px;left:1471px;">Tag Code:</div>
<div id="t82" class="a lb" style="top:601.00px;font-size:13px;line-height:16px;letter-spacing:-0.047px;left:1582px;width:250px;text-align:right;">E1011676</div>
<div id="t83" class="a lb" style="top:653.00px;font-size:13px;line-height:16px;letter-spacing:0.370px;left:1471px;">Quantity:</div>
<div id="t84" class="a lb" style="top:653.00px;font-size:13px;line-height:16px;left:1582px;width:250px;text-align:right;">1</div>
<div class="a sec" style="left:265px;top:702px;width:1576px;height:37px"></div>
<svg class="a" style="left:283px;top:715px" width="13" height="13" viewBox="0 0 13 13"><path d="M3.8 .8v3.6H.5M8.2 .8v3.6h3.3M3.8 11.2V7.6H.5M8.2 11.2V7.6h3.3" fill="none" stroke="#1f2430" stroke-width="1.1"/></svg>
<div id="t85" class="a " style="top:714.00px;font-size:13px;line-height:16px;letter-spacing:-0.165px;left:300.6px;font-weight:bold;color:#1f2228">Commercials</div>
<div id="t86" class="a " style="top:713.00px;font-size:11.5px;line-height:14px;letter-spacing:0.341px;left:1658px;color:#2a2f38">+ Add Commercial</div>
<svg class="a" style="left:1769px;top:714px" width="11" height="11" viewBox="0 0 11 11"><rect x="1.5" y="1.5" width="8.5" height="8.5" rx=".8" fill="none" stroke="#1f2430" stroke-width="1"/><path d="M4 4l3.5 3.5M7.5 4l-3.5 3.5" stroke="#1f2430" stroke-width="1"/></svg>
<div id="t87" class="a " style="top:713.00px;font-size:11.5px;line-height:14px;letter-spacing:0.128px;left:1783px;color:#2a2f38">Hide Me</div>
<div id="t88" class="a " style="top:750.00px;font-size:13px;line-height:16px;transform:scaleX(0.9478);transform-origin:0 0;left:267.5px;color:#4a4f5a;-webkit-text-stroke:.3px #4a4f5a">COMMERCIAL DETAILS (AED)</div>
<div class="a cell" style="left:265px;top:770px;width:379px;height:36px"></div>
<div class="a cell" style="left:265px;top:805px;width:379px;height:36px"></div>
<div class="a cell" style="left:265px;top:840px;width:379px;height:36px"></div>
<div class="a cell" style="left:664px;top:770px;width:379px;height:36px"></div>
<div class="a cell" style="left:664px;top:805px;width:379px;height:36px"></div>
<div class="a cell" style="left:664px;top:840px;width:379px;height:36px"></div>
<div class="a cell" style="left:1063px;top:770px;width:379px;height:36px"></div>
<div class="a cell" style="left:1063px;top:805px;width:379px;height:36px"></div>
<div class="a cell" style="left:1063px;top:840px;width:379px;height:36px"></div>
<div class="a cell" style="left:1462px;top:770px;width:379px;height:36px"></div>
<div class="a cell" style="left:1462px;top:805px;width:379px;height:36px"></div>
<div class="a cell" style="left:1462px;top:840px;width:379px;height:36px"></div>
<div id="t89" class="a lb" style="top:781.00px;font-size:13px;line-height:16px;letter-spacing:0.210px;left:274px;">Supplier:</div>
<div id="t90" class="a lb" style="top:816.00px;font-size:13px;line-height:16px;letter-spacing:-0.048px;left:274px;">External Ref. Code:</div>
<div id="t91" class="a lb" style="top:816.00px;font-size:13px;line-height:16px;letter-spacing:-0.035px;left:385px;width:250px;text-align:right;">50069542</div>
<div id="t92" class="a lb" style="top:851.00px;font-size:13px;line-height:16px;letter-spacing:0.161px;left:274px;">Item Cost:</div>
<div id="t93" class="a lb" style="top:781.00px;font-size:13px;line-height:16px;letter-spacing:0.105px;left:673px;">Delivery Date:</div>
<div id="t94" class="a lb" style="top:816.00px;font-size:13px;line-height:16px;letter-spacing:0.191px;left:673px;">Commissioning Date:</div>
<div id="t95" class="a lb" style="top:816.00px;font-size:13px;line-height:16px;letter-spacing:-0.234px;left:784px;width:250px;text-align:right;">Jan 01, 2014</div>
<div id="t96" class="a lb" style="top:851.00px;font-size:13px;line-height:16px;letter-spacing:0.124px;left:673px;">Labour Cost:</div>
<div id="t97" class="a lb" style="top:781.00px;font-size:13px;line-height:16px;letter-spacing:0.216px;left:1072px;">PO Number:</div>
<div id="t98" class="a lb" style="top:816.00px;font-size:13px;line-height:16px;letter-spacing:-0.082px;left:1072px;">PO Date:</div>
<div id="t99" class="a lb" style="top:851.00px;font-size:13px;line-height:16px;letter-spacing:0.133px;left:1072px;">Other Cost:</div>
<div id="t100" class="a lb" style="top:781.00px;font-size:13px;line-height:16px;letter-spacing:0.260px;left:1471px;">Invoice Number:</div>
<div id="t101" class="a lb" style="top:816.00px;font-size:13px;line-height:16px;letter-spacing:0.093px;left:1471px;">Invoice Date:</div>
<div id="t102" class="a lb" style="top:851.00px;font-size:13px;line-height:16px;letter-spacing:0.148px;left:1471px;">Total Cost:</div>

</body></html>
